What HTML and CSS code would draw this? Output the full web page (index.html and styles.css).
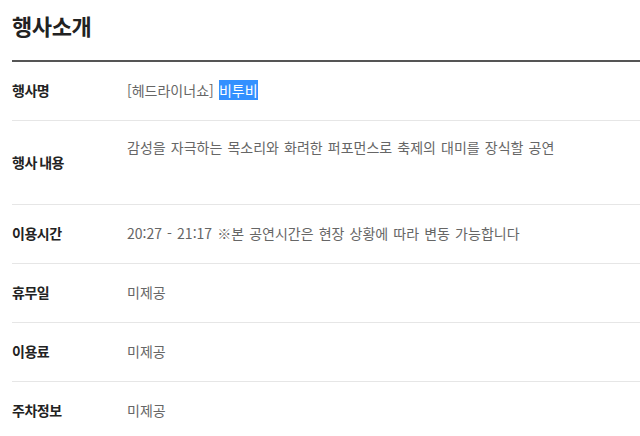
FILE: index.html
```html
<!DOCTYPE html>
<html lang="ko">
<head>
<meta charset="utf-8">
<link rel="stylesheet" href="styles.css">
</head>
<body>
<section class="info">
  <h2 class="title">행사소개</h2>
  <dl class="table">
    <div class="row">
      <dt class="label">행사명</dt>
      <dd class="value">[헤드라이너쇼] <span class="sel">비투비</span></dd>
    </div>
    <div class="row row-tall">
      <dt class="label label-tight">행사 내용</dt>
      <dd class="value value-top">감성을 자극하는 목소리와 화려한 퍼포먼스로 축제의 대미를 장식할 공연</dd>
    </div>
    <div class="row">
      <dt class="label">이용시간</dt>
      <dd class="value">20:27 - 21:17 ※본 공연시간은 현장 상황에 따라 변동 가능합니다</dd>
    </div>
    <div class="row">
      <dt class="label">휴무일</dt>
      <dd class="value">미제공</dd>
    </div>
    <div class="row">
      <dt class="label">이용료</dt>
      <dd class="value">미제공</dd>
    </div>
    <div class="row">
      <dt class="label">주차정보</dt>
      <dd class="value">미제공</dd>
    </div>
  </dl>
</section>
</body>
</html>
```
FILE: styles.css
```css
html, body {
  margin: 0;
  padding: 0;
  background: #fff;
}
body {
  font-family: "Noto Sans CJK KR", "Noto Sans", sans-serif;
  color: #222;
}
.info {
  margin-left: 12px;
}
.title {
  margin: 0;
  padding-top: 10px;
  box-sizing: border-box;
  height: 62px;
  font-size: 22px;
  font-weight: 700;
  line-height: 30px;
  letter-spacing: -0.4px;
  color: #222;
  border-bottom: 2px solid #555;
}
.table {
  margin: 0;
}
.row {
  display: flex;
  align-items: center;
  height: 56px;
  padding-bottom: 2px;
  border-bottom: 1px solid #e6e6e6;
}
.row-tall {
  height: 81px;
}
.label {
  width: 115px;
  flex: none;
  font-size: 14px;
  font-weight: 700;
  letter-spacing: -0.5px;
  color: #222;
}
.label-tight {
  word-spacing: -1px;
}
.value {
  margin: 0;
  font-size: 14px;
  letter-spacing: 0;
  word-spacing: 1.2px;
  color: #666;
}
.value-top {
  align-self: flex-start;
  padding-top: 16px;
}
.sel {
  background: #3390ff;
  color: #fff;
}
```
